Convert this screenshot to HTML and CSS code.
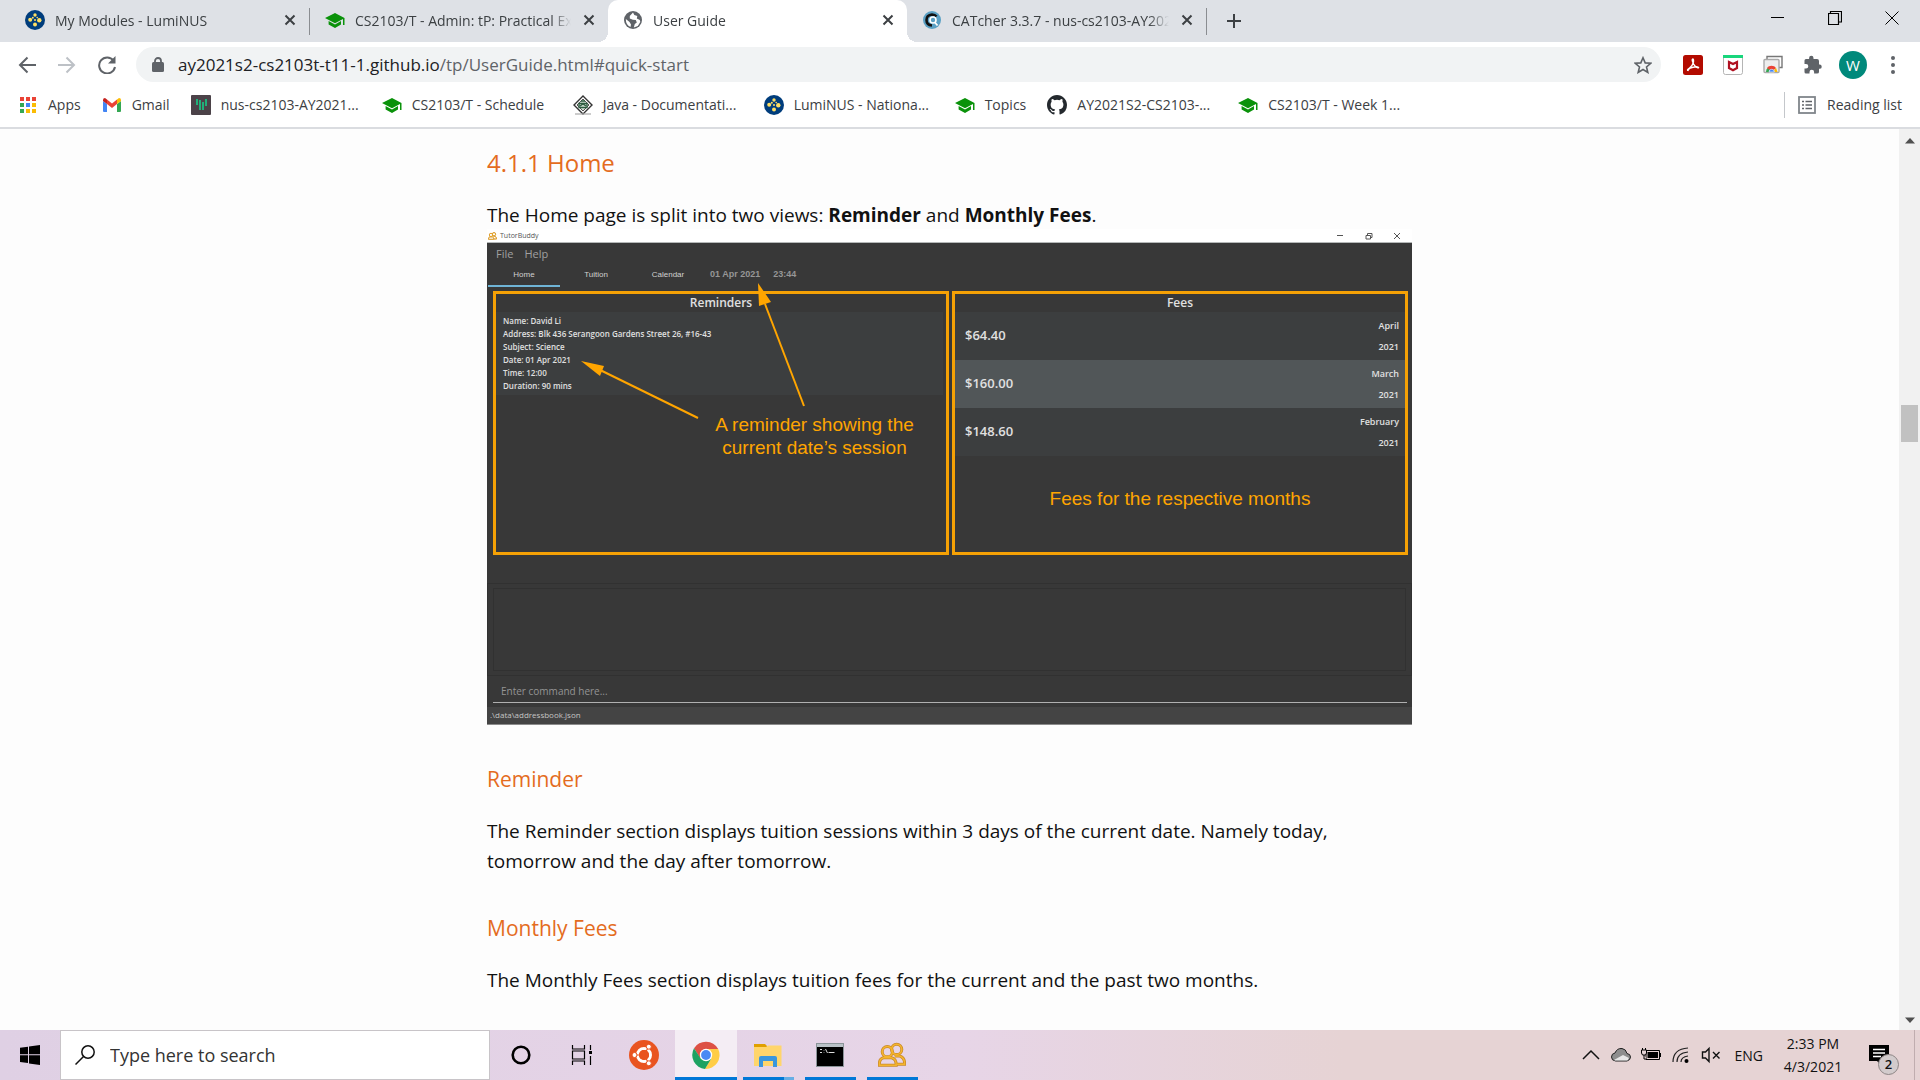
FILE: index.html
```html
<!DOCTYPE html>
<html lang="en">
<head>
<meta charset="utf-8">
<title>User Guide</title>
<link rel="stylesheet" href="styles.css">
</head>
<body>
<svg class="sprite" aria-hidden="true">
  <symbol id="lumi" viewBox="0 0 20 20"><circle cx="10" cy="10" r="10" fill="#003d7c"/><g fill="#ffdf63"><circle cx="10" cy="5" r="1.700"/><circle cx="7.800" cy="7.800" r="1"/><circle cx="5.200" cy="9.800" r="2"/><circle cx="10" cy="10" r="1"/><circle cx="14.300" cy="10.300" r="2.200"/><circle cx="12.200" cy="7.500" r=".8"/><circle cx="10" cy="14.500" r="2"/></g></symbol>
  <symbol id="cap" viewBox="0 0 20 20"><path fill="#0a920a" d="M10 3 0 8l10 5.200 8-4.200v6h1.500V8zM3.600 11v3.600L10 18l6-3.400V11l-6 3.400z"/></symbol>
  <symbol id="close" viewBox="0 0 12 12"><path d="m1.500 1.500 9 9m0-9-9 9" fill="none" stroke="#3c4043" stroke-width="2"/></symbol>
  <symbol id="people" viewBox="0 0 30 26"><g fill="none" stroke="#c98a2b" stroke-width="3.200"><circle cx="20" cy="7" r="5.500"/><path d="M18 14h5q6 2 5.500 9H20"/><circle cx="10" cy="9.500" r="5.500"/><path d="M6 16q-5 1-4.500 8h18q0-7-5-8z"/></g><g fill="none" stroke="#f5b52e" stroke-width="1.600"><circle cx="20" cy="7" r="5.500"/><path d="M18 14h5q6 2 5.500 9H20"/><circle cx="10" cy="9.500" r="5.500"/><path d="M6 16q-5 1-4.500 8h18q0-7-5-8z"/></g></symbol>
</svg>
<div class="screen">
  <header class="browser">
    <div class="tabstrip">
      <div class="tab"><svg class="fav"><use href="#lumi"/></svg><span class="tab-title">My Modules - LumiNUS</span><button class="tab-close" aria-label="Close tab"><svg><use href="#close"/></svg></button></div>
      <div class="tab ruled"><svg class="fav"><use href="#cap"/></svg><span class="tab-title">CS2103/T - Admin: tP: Practical Exam</span><button class="tab-close" aria-label="Close tab"><svg><use href="#close"/></svg></button></div>
      <div class="tab active"><svg class="fav" viewBox="0 0 20 20"><circle cx="10" cy="10" r="9" fill="#5f6368"/><path fill="#fff" d="M10 2.500 6.800 6v2.500l3 1.200 3 .3 1 2.500-2 1.500-1 3.500 4-1.500 2.500-4-.5-2-3-1.500.5-2.500-3-1zM2.800 9l3.700 3 1.500 2.500-.5 2.500q-4.700-2-4.700-8z"/></svg><span class="tab-title">User Guide</span><button class="tab-close" aria-label="Close tab"><svg><use href="#close"/></svg></button></div>
      <div class="tab"><svg class="fav" viewBox="0 0 20 20"><circle cx="10" cy="10" r="9" fill="#5aa0c4"/><path d="M14.500 6.500Q13 4.500 10 4.500 4.500 5 4.500 10t5.500 5.500" fill="none" stroke="#111" stroke-width="2.600"/><circle cx="11" cy="10" r="3" fill="#5aa0c4" stroke="#fff" stroke-width="1.600"/><path d="m13 12.500 2.500 3" stroke="#fff" stroke-width="1.800"/></svg><span class="tab-title">CATcher 3.3.7 - nus-cs2103-AY2021</span><button class="tab-close" aria-label="Close tab"><svg><use href="#close"/></svg></button></div>
      <button class="new-tab" aria-label="New tab"><svg viewBox="0 0 16 16"><path d="M8 1v14M1 8h14" stroke="#3c4043" stroke-width="2"/></svg></button>
      <div class="window-buttons">
        <button aria-label="Minimize"><svg viewBox="0 0 14 14"><path d="M0 6.500h13" stroke="#000"/></svg></button>
        <button aria-label="Restore"><svg viewBox="0 0 14 14"><path d="M.5 2.500h10v11H.5zM2.500 2.500v-2h11v10.500h-3" fill="none" stroke="#000" stroke-width="1.200"/></svg></button>
        <button aria-label="Close"><svg viewBox="0 0 14 14"><path d="m.5.5 13 13m0-13-13 13" stroke="#000"/></svg></button>
      </div>
    </div>
    <div class="toolbar">
      <button class="nav" aria-label="Back"><svg viewBox="0 0 18 18"><path d="M18 9H2m7.500-7.500L2 9l7.500 7.500" fill="none" stroke="#5f6368" stroke-width="2"/></svg></button>
      <button class="nav" aria-label="Forward"><svg viewBox="0 0 18 18"><path d="M0 9h16M8.500 1.500 16 9l-7.500 7.500" fill="none" stroke="#bdc1c6" stroke-width="2"/></svg></button>
      <button class="nav" aria-label="Reload"><svg viewBox="0 0 18 18"><path d="M15.500 4.500A8 8 0 1 0 17 11" fill="none" stroke="#5f6368" stroke-width="2"/><path d="M17.500 0v7.500H10z" fill="#5f6368"/></svg></button>
      <div class="address">
        <svg class="lock" viewBox="0 0 12 16"><rect y="5" width="12" height="10" rx="1.500" fill="#5f6368"/><path d="M3 6V4a3 3 0 0 1 6 0v2" fill="none" stroke="#5f6368" stroke-width="1.800"/></svg>
        <span class="url">ay2021s2-cs2103t-t11-1.github.io<span class="path">/tp/UserGuide.html#quick-start</span></span>
        <button class="star" aria-label="Bookmark this page"><svg viewBox="0 0 18 18"><path d="m9 1.800 2.200 5.100 5.500.4-4.200 3.700 1.300 5.400L9 13.500l-4.800 2.900L5.500 11 1.300 7.300l5.500-.4z" fill="none" stroke="#5f6368" stroke-width="1.600"/></svg></button>
      </div>
      <div class="extensions">
        <button aria-label="PDF"><svg viewBox="0 0 20 20"><rect width="20" height="20" rx="2.500" fill="#b30b00"/><path d="M5 15.500q-1.500-.5 1.500-2.500 3-2 4-6 .3-3-.8-3-1 .5 0 3 1.500 4.500 5.300 6 1.500-.5-.5-1.200-4-.3-8 1.700-1 1.500-1.500 2z" fill="none" stroke="#fff" stroke-width="1.300"/></svg></button>
        <button aria-label="Security"><svg viewBox="0 0 20 20"><rect x=".5" y=".5" width="19" height="19" rx="2" fill="#fff" stroke="#b5b5b5"/><path d="M0 0h20v3H0z" fill="#18d67c"/><path d="m6 7 4 2 4-2v6l-4 2.200L6 13z" fill="none" stroke="#b01020" stroke-width="2.200"/></svg></button>
        <button aria-label="Tabs"><svg viewBox="0 0 20 20"><path d="M4 5V1.500h15v11h-3" fill="none" stroke="#777" stroke-width="1.400"/><rect x="1" y="4.500" width="15" height="13" rx="1" fill="#eee" stroke="#aaa" stroke-width="1.400"/><path d="M3 17a5.500 5.500 0 0 1 2-4.500L10 17z" fill="#35a853"/><path d="M4 13.200a5.300 5.300 0 0 1 9 0L9 16z" fill="#ea4335"/><path d="M13 12.700 14.500 17H10z" fill="#fbbc04"/><path d="M6 17a2.700 2.700 0 0 1 5.400 0z" fill="#4285f4" stroke="#fff" stroke-width=".6"/></svg></button>
        <button aria-label="Extensions"><svg viewBox="0 0 20 20"><path d="M17 9.500h-1V6q0-2-2-2h-3.500V3a2.200 2.200 0 0 0-4.400 0v1H3Q1.500 4 1.500 5.500V9H3a2.300 2.300 0 0 1 0 4.600H1.500V17q0 1.500 1.500 1.500h3.500V17a2.300 2.300 0 0 1 4.600 0v1.500H14q2 0 2-1.500v-3.200h1a2.200 2.200 0 0 0 0-4.300z" fill="#5f6368"/></svg></button>
        <button class="avatar" aria-label="Profile">W</button>
        <button aria-label="Menu"><svg viewBox="0 0 20 20"><g fill="#5f6368"><circle cx="10" cy="3" r="2"/><circle cx="10" cy="10" r="2"/><circle cx="10" cy="17" r="2"/></g></svg></button>
      </div>
    </div>
    <nav class="bookmarks">
      <a href="#"><svg viewBox="0 0 20 20"><path fill="#ea4335" d="M2 2h4v4H2zM8 2h4v4H8zM14 2h4v4h-4z"/><path fill="#34a853" d="M2 8h4v4H2zM2 14h4v4H2z"/><path fill="#4285f4" d="M8 8h4v4H8z"/><path fill="#fbbc04" d="M14 8h4v4h-4zM8 14h4v4H8zM14 14h4v4h-4z"/></svg><span>Apps</span></a>
      <a href="#"><svg viewBox="0 0 20 20"><path fill="#4285f4" d="M1 6v10q0 1 1 1h3V9z"/><path fill="#34a853" d="M19 6v10q0 1-1 1h-3V9z"/><path fill="#ea4335" d="M5 4.500 10 8.500l5-4V9l-5 4-5-4z"/><path fill="#c5221f" d="M1 5q0-2 2-2l2 1.500V9L1 6z"/><path fill="#fbbc04" d="M19 5q0-2-2-2l-2 1.500V9l4-3z"/></svg><span>Gmail</span></a>
      <a href="#"><svg viewBox="0 0 20 20"><rect width="20" height="20" rx="1" fill="#4b4248"/><path d="M6 4v6M9 5v10M12 7v8M15 4v7" stroke="#14d68a" stroke-width="1.500"/></svg><span class="long">nus-cs2103-AY2021...</span></a>
      <a href="#"><svg><use href="#cap"/></svg><span class="long">CS2103/T - Schedule</span></a>
      <a href="#"><svg viewBox="0 0 20 20"><path d="m10 1 9 9-9 9-9-9z" fill="#fff" stroke="#333" stroke-width="1.400"/><path d="m10 4 6 6-6 6-6-6z" fill="#cfe0d4" stroke="#555"/><path d="M6 8.500h8v4H6zM8 6h4M7 11l3-2 3 2" fill="none" stroke="#2d5c40" stroke-width="1.300"/><path d="M2 19h16" stroke="#aaa" stroke-width="1.200"/></svg><span class="long">Java - Documentati...</span></a>
      <a href="#"><svg><use href="#lumi"/></svg><span class="long">LumiNUS - Nationa...</span></a>
      <a href="#"><svg><use href="#cap"/></svg><span>Topics</span></a>
      <a href="#"><svg viewBox="0 0 16 16"><path fill="#24292e" d="M8 0C3.580 0 0 3.580 0 8c0 3.540 2.290 6.530 5.470 7.590.4.070.55-.17.55-.38 0-.19-.01-.82-.01-1.490-2.010.37-2.530-.49-2.690-.94-.09-.23-.48-.94-.82-1.130-.28-.15-.68-.52-.01-.53.63-.01 1.080.58 1.230.82.72 1.210 1.870.87 2.330.66.07-.52.28-.87.51-1.070-1.780-.2-3.640-.89-3.640-3.950 0-.87.31-1.590.82-2.150-.08-.2-.36-1.020.08-2.120 0 0 .67-.21 2.200.82a7.600 7.600 0 0 1 4 0c1.530-1.040 2.200-.82 2.200-.82.44 1.100.16 1.920.08 2.120.51.56.82 1.270.82 2.150 0 3.070-1.870 3.750-3.650 3.950.29.25.54.73.54 1.480 0 1.070-.01 1.930-.01 2.200 0 .21.15.46.55.38A8 8 0 0 0 16 8c0-4.420-3.580-8-8-8z"/></svg><span class="long">AY2021S2-CS2103-...</span></a>
      <a href="#"><svg><use href="#cap"/></svg><span class="long">CS2103/T - Week 1...</span></a>
      <button class="reading"><svg viewBox="0 0 20 20"><rect x="2" y="2" width="16" height="16" fill="none" stroke="#80868b" stroke-width="1.800"/><path d="M5 6.500h2m1.500 0H15M5 10h2m1.500 0H15M5 13.500h2m1.500 0H15" stroke="#5f6368" stroke-width="1.500"/></svg>Reading list</button>
    </nav>
  </header>

  <div class="viewport">
    <main class="article">
      <h2>4.1.1 Home</h2>
      <p class="intro">The Home page is split into two views: <strong>Reminder</strong> and <strong>Monthly Fees</strong>.</p>
      <figure class="app">
        <div class="app-title"><svg><use href="#people"/></svg><span>TutorBuddy</span>
          <svg class="app-controls" viewBox="0 0 64 8"><path d="M0 3.500h6M29 3.500h4.500V7H29zM30.500 3V1.500H35v4h-1M57 1l6 6m0-6-6 6" fill="none" stroke="#555"/></svg></div>
        <div class="app-body">
          <div class="app-menu"><span>File</span><span>Help</span></div>
          <div class="app-tabs"><span class="on">Home</span><span>Tuition</span><span>Calendar</span><b>01 Apr 2021</b><b>23:44</b></div>
          <div class="panes">
            <section class="pane">
              <h3>Reminders</h3>
              <div class="card">
                <div>Name: David Li</div><div>Address: Blk 436 Serangoon Gardens Street 26, #16-43</div><div>Subject: Science</div><div>Date: 01 Apr 2021</div><div>Time: 12:00</div><div>Duration: 90 mins</div>
              </div>
              <p class="note remind-note">A reminder showing the<br>current date’s session</p>
              <svg class="arrows" viewBox="0 0 330 150"><g stroke="#ffa500" stroke-width="2" fill="#ffa500"><path d="M206 135 102 84"/><path d="m89 78 23 5-4 10z" stroke="none"/><path d="M312 123 273 21"/><path d="m266 0 13 19-12 4z" stroke="none"/></g></svg>
            </section>
            <section class="pane">
              <h3>Fees</h3>
              <div class="fee"><strong>$64.40</strong><span>April<br>2021</span></div>
              <div class="fee alt"><strong>$160.00</strong><span>March<br>2021</span></div>
              <div class="fee"><strong>$148.60</strong><span>February<br>2021</span></div>
              <p class="note">Fees for the respective months</p>
            </section>
          </div>
          <div class="result"><div></div></div>
          <div class="command"><input type="text" aria-label="Command" placeholder="Enter command here..."></div>
          <div class="status">.\data\addressbook.json</div>
        </div>
      </figure>
      <h3 class="sub">Reminder</h3>
      <p>The Reminder section displays tuition sessions within 3 days of the current date. Namely today, tomorrow and the day after tomorrow.</p>
      <h3 class="sub">Monthly Fees</h3>
      <p>The Monthly Fees section displays tuition fees for the current and the past two months.</p>
    </main>
    <div class="scrollbar" aria-hidden="true"><svg viewBox="0 0 10 6"><path d="M0 5.500 5 0l5 5.500z" fill="#505050"/></svg><i></i><svg viewBox="0 0 10 6"><path d="M0 .5 5 6l5-5.500z" fill="#505050"/></svg></div>
  </div>

  <footer class="taskbar">
    <button class="start" aria-label="Start"><svg viewBox="0 0 20 20"><path d="M0 2.800 8 1.700v7.600H0zM9 1.500 20 0v9.300H9zM0 10.300h8v7.800l-8-1.100zM9 10.300h11V20L9 18.400z"/></svg></button>
    <label class="search"><svg viewBox="0 0 20 20"><g fill="none" stroke="#111" stroke-width="1.500"><circle cx="13" cy="7" r="6.200"/><path d="M8.500 11.500.5 19.500"/></g></svg><input type="text" aria-label="Search" placeholder="Type here to search"></label>
    <div class="tasks">
      <button aria-label="Cortana"><svg viewBox="0 0 28 28"><circle cx="14" cy="14" r="8.300" fill="none" stroke="#000" stroke-width="2.600"/></svg></button>
      <button aria-label="Task view"><svg viewBox="0 0 28 28"><path d="M4.500 4v4h12V4M4.500 24v-4h12v4M4.500 10h12v8h-12zM22.500 4v5M22.500 15v9" fill="none" stroke="#000" stroke-width="1.200"/><path d="M21 10h3v3h-3z"/></svg></button>
      <button class="ubuntu" aria-label="Ubuntu"><svg viewBox="0 0 30 30"><circle cx="15" cy="15" r="15" fill="#e95420"/><circle cx="15" cy="15" r="6.500" fill="none" stroke="#fff" stroke-width="3"/><path d="m15 15-9 0m9 0 4.500-8m-4.500 8 4.500 8" stroke="#e95420" stroke-width="1.200"/><circle cx="15" cy="15" r="5" fill="#e95420"/><g fill="#fff" stroke="#e95420"><circle cx="5.500" cy="15" r="2.500"/><circle cx="19.800" cy="6.700" r="2.500"/><circle cx="19.800" cy="23.300" r="2.500"/></g></svg></button>
      <button class="open current" aria-label="Chrome"><svg viewBox="0 0 28 28"><path fill="#dd5144" d="M2 7.200a14 14 0 0 1 24.200.8H14L8 17z"/><path fill="#ffcd46" d="M26.200 8A14 14 0 0 1 13 28l6.500-11L14 8z"/><path fill="#1da261" d="M2 7.200A14 14 0 0 0 13 28l6-10-10 0z"/><circle cx="14" cy="14" r="6.200" fill="#fff"/><circle cx="14" cy="14" r="4.900" fill="#4a8af4"/></svg></button>
      <button class="open files" aria-label="File Explorer"><svg viewBox="0 0 28 28"><path fill="#e0a000" d="M0 3h11l2 2v3H0z"/><path fill="#ffd56b" d="M0 6h12l2-1.500h13.500V25H0z"/><path fill="#3a96dd" d="M5 26V17q0-2 2-2h14q2 0 2 2v9h-4v-6H9v6z"/></svg></button>
      <button class="open" aria-label="Command Prompt"><svg viewBox="0 0 28 28"><rect x=".5" y="2.500" width="27" height="23" fill="#000" stroke="#8b9499"/><path fill="#b9c1c6" d="M1 3h26v3H1z"/><path d="M4 8.500h2m-2 3h2M8 9v.5m0 1.500v.5M9.500 8l2 4M12.500 11.500h6" stroke="#ddd"/></svg></button>
      <button class="open" aria-label="TutorBuddy"><svg><use href="#people"/></svg></button>
    </div>
    <div class="tray">
      <svg viewBox="0 0 20 20"><path d="m2 14 8-8 8 8" fill="none" stroke="#111" stroke-width="1.500"/></svg>
      <svg viewBox="0 0 20 20"><path d="M4.500 16Q.5 15.500.5 12T4 8q2-5 7-4.500 4 .5 5 5 3.500.5 3.500 3.500T16 16z" fill="#8e8e8e" stroke="#222"/><path d="m3 15 9-5 6 3-1.500 2.500H4z" fill="#e8e8e8"/></svg>
      <svg viewBox="0 0 20 20"><path d="M5 5.500h13.500v9H5z" fill="none" stroke="#000"/><path d="M6.500 7H17v6H6.500zM18.500 8H20v4h-1.500z"/><path d="M.5 5h5v3l-1 2h-3l-1-2zM1.500 3v2m3-2v2M3 10v4h3" fill="#e6d4d7" stroke="#000"/></svg>
      <svg viewBox="0 0 20 20"><g fill="none" stroke="#222" stroke-width="1.200"><path d="M2 17Q2 4 17 3"/><path d="M6 17Q6 8 17 7"/><path d="M10 17q0-5 7-6"/></g><circle cx="15.500" cy="16" r="2"/></svg>
      <svg viewBox="0 0 20 20"><path d="M1.500 7h3L8 3.500v13L4.500 13h-3zM12 7l6.500 6.500m0-6.500L12 13.500" fill="none" stroke="#111" stroke-width="1.400"/></svg>
      <span class="lang">ENG</span>
      <time class="clock">2:33 PM<br>4/3/2021</time>
      <button class="alerts" aria-label="Notifications"><svg viewBox="0 0 20 20"><path d="M0 0h20v16h-8v4l-4-4H0z"/><path d="M4 4.500h12M4 8h12M4 11.500h8" stroke="#fff" stroke-width="1.300"/></svg><span class="badge">2</span></button>
    </div>
  </footer>
</div>
</body>
</html>
```

FILE: styles.css
```css
* { box-sizing: border-box; }
body { margin: 0; font-family: "Open Sans", "Noto Sans", sans-serif; color: #111; }
button { border: 0; padding: 0; background: none; font: inherit; color: inherit; display: flex; align-items: center; justify-content: center; }
svg { display: block; flex: none; }
.sprite { position: absolute; width: 0; height: 0; }
.screen { height: 100vh; display: flex; flex-direction: column; overflow: hidden; }

/* browser window */
.browser { flex: none; background: #fff; border-bottom: 2px solid #dadce0; font-size: 14px; color: #3c4043; }
.tabstrip { height: 42px; display: flex; align-items: stretch; background: #dee1e6; padding-left: 10px; }
.tab { position: relative; width: 299px; padding: 0 11px 2px 15px; display: flex; align-items: center; gap: 10px; }
.tab.active { background: #fff; border-radius: 10px 10px 0 0; }
/* curved feet where the active tab meets the toolbar */
.tab.active::before, .tab.active::after { content: ""; position: absolute; bottom: 0; width: 10px; height: 10px; }
.tab.active::before { left: -10px; background: radial-gradient(circle at 0 0, transparent 10px, #fff 10px); }
.tab.active::after { right: -10px; background: radial-gradient(circle at 100% 0, transparent 10px, #fff 10px); }
.tab.ruled { border-left: 1px solid #8a8d91; border-image: linear-gradient(transparent 9px, #8a8d91 9px, #8a8d91 34px, transparent 34px) 1; }
.fav { width: 20px; height: 20px; }
.tab-title { flex: 1; overflow: hidden; white-space: nowrap; mask-image: linear-gradient(to right, #000 calc(100% - 20px), transparent); }
.tab-close { width: 16px; height: 16px; }
.tab-close svg { width: 12px; height: 12px; }
.new-tab { width: 55px; border-left: 1px solid; border-image: linear-gradient(transparent 9px, #8a8d91 9px, #8a8d91 34px, transparent 34px) 1; }
.new-tab svg { width: 16px; height: 16px; }
.window-buttons { margin-left: auto; display: flex; height: 36px; }
.window-buttons button { width: 57px; }
.window-buttons svg { width: 14px; height: 14px; }

.toolbar { height: 45px; display: flex; align-items: center; padding: 0 7px 0 7px; }
.nav { width: 40px; height: 36px; }
.nav svg { width: 18px; height: 18px; }
.address { flex: 1; height: 35px; margin-left: 9px; border-radius: 18px; background: #f1f3f4; display: flex; align-items: center; padding: 0 9px 0 16px; }
.lock { width: 12px; height: 16px; margin-right: 14px; }
.url { flex: 1; font-size: 17px; color: #202124; }
.path { color: #5f6368; }
.star svg { width: 18px; height: 18px; }
.extensions { display: flex; margin-left: 12px; }
.extensions button { width: 40px; height: 36px; }
.extensions svg { width: 20px; height: 20px; }
.extensions .avatar { width: 28px; height: 28px; margin: 4px 6px; border-radius: 50%; background: #00897b; color: #fff; font-size: 15px; }

.bookmarks { height: 40px; display: flex; align-items: center; gap: 21px; padding: 0 18px 5px; }
.bookmarks a { display: flex; align-items: center; gap: 10px; color: inherit; text-decoration: none; white-space: nowrap; }
.bookmarks svg { width: 20px; height: 20px; }
.bookmarks .long { min-width: 140px; }
.reading { margin-left: auto; gap: 10px; padding-left: 12px; border-left: 1px solid #c4c7cb; height: 26px; }

/* page */
.viewport { flex: 1; min-height: 0; display: flex; background: #fdfdfd; }
.article { flex: 0 1 925px; margin: 0 auto; font-size: 19px; line-height: 30px; }
.article h2, .article .sub { margin: 0; color: #e46c1e; font-weight: 400; }
.article h2 { font-size: 24px; line-height: 36px; padding: 16px 0 19px; }
.article p { margin: 0; }
.article .sub { font-size: 21px; line-height: 34px; padding: 0 0 20px; }
.article .sub + p { margin-bottom: 35px; }
.scrollbar { width: 21px; background: #f1f1f1; display: flex; flex-direction: column; align-items: center; padding: 9px 0 7px; }
.scrollbar svg { width: 10px; height: 6px; }
.scrollbar i { width: 17px; height: 37px; background: #c1c1c1; margin: 261px 0 auto; }

/* application picture */
.app { margin: -1px 0 37px; font-size: 9px; line-height: 13px; color: #e0e0e0; }
.app-title { height: 14px; background: #fff; border-bottom: 1px solid #b5b8b8; display: flex; align-items: center; gap: 3px; color: #555; font-size: 7px; padding: 0 11px 0 1px; }
.app-title svg { width: 9px; height: 8px; }
.app-title .app-controls { width: 64px; height: 8px; margin-left: auto; }
.app-body { background: #383838; border-bottom: 1px solid #8c8c8c; }
.app-menu { display: flex; gap: 11px; padding: 3px 9px 0; font-size: 11px; line-height: 16px; color: #a0a0a0; }
.app-tabs { height: 25px; display: flex; padding-left: 1px; line-height: 25px; font-size: 8px; font-family: "Liberation Sans", Arial, sans-serif; color: #d0d0d0; }
.app-tabs span { width: 72px; text-align: center; border-bottom: 2px solid transparent; }
.app-tabs .on { border-color: #6fb4d6; }
.app-tabs b { color: #969696; font-size: 9px; margin-left: 6px; margin-right: 7px; }
.panes { display: flex; gap: 3px; padding: 4px 4px 0 6px; }
.pane { position: relative; flex: 1; height: 264px; border: 3px solid #f5a105; }
.app h3 { margin: 0; text-align: center; font-size: 12px; line-height: 18px; font-weight: 600; }
.card { background: #3c3e3f; margin-right: 3px; padding: 2px 7px 3px; font-weight: 600; font-size: 8px; }
.fee { height: 48px; background: #3c3e3f; display: flex; align-items: center; justify-content: space-between; padding: 0 6px 1px 10px; font-weight: 600; line-height: 21px; text-align: right; }
.fee strong { font-size: 13px; font-weight: 600; }
.fee.alt { background: #515658; }
.app .note { font-family: "Liberation Sans", Arial, sans-serif; color: #ffa500; font-size: 19px; line-height: 23px; text-align: center; margin-top: 31px; }
.app .remind-note { margin: 18px 0 0 187px; }
.arrows { position: absolute; left: -4px; top: -11px; width: 330px; height: 150px; overflow: visible; }
.result { margin-top: 28px; padding: 4px 5px; border: 1px solid #313131; height: 93px; }
.result div { height: 83px; border: 1px solid #313131; }
.command { padding: 3px 5px 4px 6px; }
.command input { display: block; width: 100%; height: 24px; border: 0; border-bottom: 1px solid #b0b0b0; background: none; font: inherit; font-size: 10px; padding: 0 8px; }
.command input::placeholder { color: #949494; opacity: 1; }
.status { background: #444; line-height: 15px; padding: 0 0 2px 3px; font-size: 8px; color: #c4c4c4; }

/* taskbar */
.taskbar { flex: none; height: 50px; display: flex; background: linear-gradient(to right, #dfd0e4, #e7d5e7 50%, #e6d3d4 70%, #e6d3d4); }
.start { width: 60px; }
.start svg { width: 20px; height: 20px; }
.search { width: 430px; background: #fff; border: 1px solid #c8c4c8; display: flex; align-items: center; gap: 15px; padding: 0 14px; }
.search svg { width: 20px; height: 20px; }
.search input { flex: 1; min-width: 0; border: 0; padding: 0; font: inherit; font-size: 18px; background: none; }
.search input::placeholder { color: #333; opacity: 1; }
.tasks { display: flex; }
.tasks button { width: 62px; background-repeat: no-repeat; background-position: center bottom; background-size: 51px 3px; }
.tasks button:first-child { width: 61px; }
.tasks svg { width: 28px; height: 28px; }
.tasks .ubuntu svg { width: 30px; height: 30px; }
.tasks .open { background-image: linear-gradient(#0078d7, #0078d7); }
.tasks .current { background-color: #f4edf4; background-size: 100% 3px; }
.tasks .files { background-image: linear-gradient(to right, #0078d7 41px, #66aee5 41px); }
.tray { margin-left: auto; margin-right: 5px; padding-right: 25px; border-right: 1px solid #c0adaf; display: flex; align-items: center; gap: 10px; font-size: 14px; }
.tray svg { width: 20px; height: 20px; }
.lang { margin-left: 4px; }
.clock { width: 80px; text-align: center; line-height: 23px; }
.alerts { position: relative; margin-left: 6px; }
.badge { position: absolute; left: 9px; top: 9px; width: 21px; height: 21px; border-radius: 50%; background: #d2cbcc; border: 1px solid #8d8585; line-height: 19px; font-size: 13px; font-weight: 600; }
```
